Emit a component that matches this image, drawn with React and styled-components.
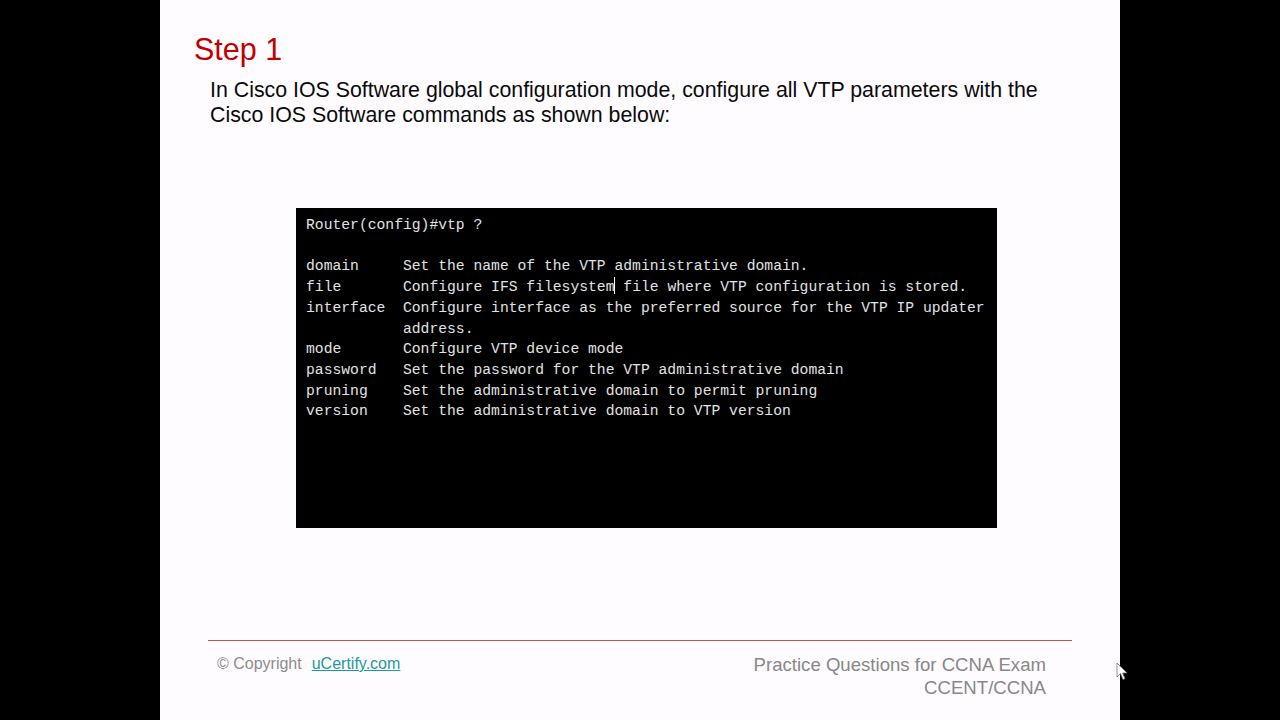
import React from 'react';
import styled, { createGlobalStyle } from 'styled-components';

const Global = createGlobalStyle`
  html, body {
    margin: 0;
    padding: 0;
    background: #000;
  }
  #root {
    width: 1280px;
    height: 720px;
  }
`;

const Stage = styled.div`
  position: relative;
  width: 1280px;
  height: 720px;
  background: #000;
  display: flex;
  justify-content: center;
`;

const Slide = styled.div`
  width: 960px;
  height: 720px;
  background: #fefcfe;
  box-sizing: border-box;
  padding-top: 31px;
  display: flex;
  flex-direction: column;
  font-family: 'Liberation Sans', Arial, sans-serif;
`;

const Title = styled.h1`
  margin: 0 0 0 34px;
  font-size: 30.5px;
  line-height: 36px;
  font-weight: 400;
  color: #c00000;
`;

const Lead = styled.p`
  margin: 11px 0 0 50px;
  font-size: 21.35px;
  line-height: 24.5px;
  color: #0a0a0a;
`;

const Terminal = styled.pre`
  margin: 81px 0 0 136px;
  width: 701px;
  height: 320px;
  box-sizing: border-box;
  padding: 7px 10px 0;
  background: #000;
  color: #e2e2e2;
  font-family: 'Liberation Mono', 'Courier New', monospace;
  font-size: 14.7px;
  line-height: 20.7px;
  white-space: pre;
  overflow: hidden;
`;

const Caret = styled.span`
  display: inline-block;
  width: 0;
  height: 17px;
  border-left: 1.5px solid #fff;
  vertical-align: -3px;
  margin-left: -1px;
`;

const Footer = styled.footer`
  margin: 112px 48px 0;
  border-top: 1.5px solid #c0504d;
  display: flex;
  justify-content: space-between;
  align-items: flex-start;
`;

const Copy = styled.div`
  margin: 13px 0 0 9px;
  font-size: 16px;
  line-height: 20px;
  color: #8c8c8c;
  display: flex;
  gap: 10px;
`;

const Link = styled.a`
  color: #1a9a9a;
  text-decoration: underline;
`;

const Course = styled.div`
  margin: 12px 26px 0 0;
  text-align: right;
  font-size: 18.6px;
  line-height: 23px;
  color: #888;
`;

const Pointer = styled.svg`
  position: absolute;
  left: 1116px;
  top: 662px;
`;

const rows = [
  ['domain', 'Set the name of the VTP administrative domain.'],
  ['file', null],
  ['interface', 'Configure interface as the preferred source for the VTP IP updater'],
  ['', 'address.'],
  ['mode', 'Configure VTP device mode'],
  ['password', 'Set the password for the VTP administrative domain'],
  ['pruning', 'Set the administrative domain to permit pruning'],
  ['version', 'Set the administrative domain to VTP version'],
];

const pad = (s) => s.padEnd(11, ' ');

export default function App() {
  return (
    <Stage>
      <Global />
      <Slide>
        <Title>Step 1</Title>
        <Lead>
          In Cisco IOS Software global configuration mode, configure all VTP parameters with the
          <br />
          Cisco IOS Software commands as shown below:
        </Lead>
        <Terminal>
          {'Router(config)#vtp ?\n\n'}
          {rows.map(([cmd, desc]) =>
            desc ? (
              <React.Fragment key={cmd + desc}>{pad(cmd) + desc + '\n'}</React.Fragment>
            ) : (
              <React.Fragment key={cmd}>
                {pad(cmd) + 'Configure IFS filesystem'}
                <Caret />
                {' file where VTP configuration is stored.\n'}
              </React.Fragment>
            )
          )}
        </Terminal>
        <Footer>
          <Copy>
            <span>© Copyright</span>
            <Link href="#">uCertify.com</Link>
          </Copy>
          <Course>
            Practice Questions for CCNA Exam
            <br />
            CCENT/CCNA
          </Course>
        </Footer>
      </Slide>
      <Pointer width="12" height="19" viewBox="0 0 12 19">
        <path d="M1 1 L1 15 L4.5 11.5 L7 17.5 L9 16.6 L6.6 11 L11 11 Z" fill="#fff" stroke="#777" strokeWidth="0.8" />
      </Pointer>
    </Stage>
  );
}
